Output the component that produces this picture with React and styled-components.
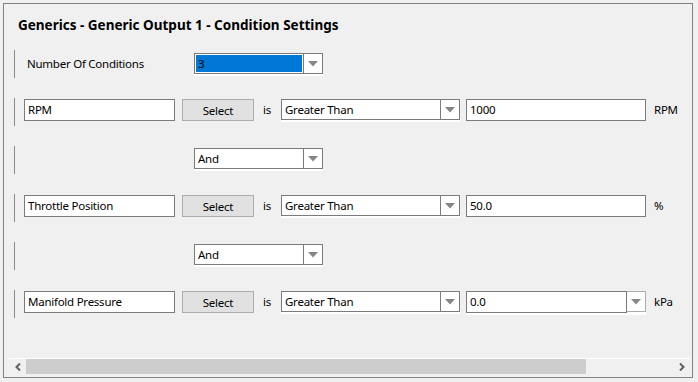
import React from 'react';
import styled, { createGlobalStyle } from 'styled-components';

const GlobalStyle = createGlobalStyle`
	html, body {
		margin: 0;
		padding: 0;
		background: #f0f0f0;
	}
	body {
		font-family: 'Noto Sans', 'Open Sans', sans-serif;
		font-size: 11.5px;
		letter-spacing: -0.25px;
		color: #000;
	}
`;

const conditions = [
	{ name: 'RPM', value: '1000', unit: 'RPM' },
	{ name: 'Throttle Position', value: '50.0', unit: '%' },
	{ name: 'Manifold Pressure', value: '0.0', unit: 'kPa', editable: true },
];

const Arrow = () => (
	<svg width="10" height="6" viewBox="0 0 10 6">
		<polygon points="0,0 10,0 5,5.5" fill="#868686" />
	</svg>
);

const Combo = ({ value, width, selected, left, top }) => (
	<ComboBox $width={width} $left={left} $top={top}>
		<ComboText $selected={selected}>{value}</ComboText>
		<ComboButton>
			<Arrow />
		</ComboButton>
	</ComboBox>
);

const App = () => {
	return (
		<>
			<GlobalStyle />
			<Frame>
				<Title>Generics - Generic Output 1 - Condition Settings</Title>
				<Content>
					<Group>
						<Label>Number Of Conditions</Label>
						<Combo value="3" width={129} selected left={0} top={2} />
					</Group>
					{conditions.map((c, i) => (
						<React.Fragment key={c.name}>
							{i > 0 && (
								<Group>
									<Combo value="And" width={129} left={179} top={1} />
								</Group>
							)}
							<Group>
								<TextBox>{c.name}</TextBox>
								<SelectButton>Select</SelectButton>
								<IsLabel>is</IsLabel>
								<Combo value="Greater Than" width={179} left={0} top={0} />
								{c.editable ? (
									<EditCombo>
										<EditField>{c.value}</EditField>
										<EditButton>
											<Arrow />
										</EditButton>
									</EditCombo>
								) : (
									<ValueBox>{c.value}</ValueBox>
								)}
								<Unit>{c.unit}</Unit>
							</Group>
						</React.Fragment>
					))}
				</Content>
				<ScrollBar>
					<ScrollArrow>
						<svg width="6" height="8" viewBox="0 0 6 8">
							<polyline points="5,0.5 1.5,4 5,7.5" fill="none" stroke="#606060" strokeWidth="2" />
						</svg>
					</ScrollArrow>
					<Track>
						<Thumb $width={560} />
					</Track>
					<ScrollArrow>
						<svg width="6" height="8" viewBox="0 0 6 8">
							<polyline points="1,0.5 4.5,4 1,7.5" fill="none" stroke="#606060" strokeWidth="2" />
						</svg>
					</ScrollArrow>
				</ScrollBar>
			</Frame>
		</>
	);
};

export default App;

const Frame = styled.div`
	margin: 3px;
	width: 690px;
	height: 375px;
	box-sizing: border-box;
	border: 1px solid #828282;
	display: flex;
	flex-direction: column;
`;

const Title = styled.div`
	padding: 13px 0 0 14px;
	font-size: 13.5px;
	letter-spacing: 0;
	font-weight: 700;
	line-height: 16px;
	height: 16px;
`;

const Content = styled.div`
	flex: 1;
	padding: 17px 0 0 10px;
	display: flex;
	flex-direction: column;
	gap: 20px;
`;

const Group = styled.div`
	height: 28px;
	box-sizing: border-box;
	border-left: 1px solid #8c8c8c;
	padding-top: 1px;
	display: flex;
	align-items: flex-start;
`;

const Label = styled.div`
	width: 167px;
	margin-left: 12px;
	line-height: 24px;
	height: 24px;
	padding-top: 1px;
`;

const ComboBox = styled.div`
	margin-left: ${(p) => p.$left}px;
	margin-top: ${(p) => p.$top}px;
	width: ${(p) => p.$width}px;
	height: 21px;
	box-sizing: border-box;
	border: 1px solid #7a7a7a;
	background: #fff;
	box-shadow: 0 2px 0 #fff;
	display: flex;
	align-items: stretch;
`;

const ComboText = styled.div`
	flex: 1;
	margin: 1px;
	padding-left: 2px;
	line-height: 17px;
	background: ${(p) => (p.$selected ? '#0078d7' : '#fff')};
	color: #000;
	white-space: nowrap;
	overflow: hidden;
`;

const ComboButton = styled.div`
	width: 18px;
	border-left: 1px solid #7a7a7a;
	display: flex;
	align-items: center;
	justify-content: center;
`;

const TextBox = styled.div`
	margin-left: 9px;
	width: 151px;
	height: 22px;
	box-sizing: border-box;
	border: 1px solid #7a7a7a;
	background: #fff;
	padding-left: 3px;
	line-height: 20px;
	white-space: nowrap;
`;

const SelectButton = styled.div`
	margin-left: 7px;
	width: 72px;
	height: 22px;
	box-sizing: border-box;
	border: 1px solid #adadad;
	background: #e1e1e1;
	text-align: center;
	line-height: 21px;
`;

const IsLabel = styled.div`
	width: 27px;
	box-sizing: border-box;
	padding-left: 9px;
	line-height: 22px;
`;

const ValueBox = styled(TextBox)`
	margin-left: 6px;
	width: 180px;
`;

const EditCombo = styled.div`
	margin-left: 6px;
	display: flex;
	background: #fff;
	box-shadow: 0 2px 0 #fff;
`;

const EditField = styled(TextBox)`
	margin-left: 0;
	width: 161px;
`;

const EditButton = styled.div`
	width: 19px;
	height: 21px;
	box-sizing: border-box;
	border: 1px solid #adadad;
	border-left: none;
	display: flex;
	align-items: center;
	justify-content: center;
`;

const Unit = styled.div`
	margin-left: 8px;
	line-height: 22px;
`;

const ScrollBar = styled.div`
	margin: 0 2px 3px 5px;
	height: 16px;
	box-sizing: border-box;
	border-top: 1px solid #fff;
	display: flex;
	align-items: stretch;
`;

const ScrollArrow = styled.div`
	width: 17px;
	display: flex;
	align-items: center;
	justify-content: center;
`;

const Track = styled.div`
	flex: 1;
	display: flex;
`;

const Thumb = styled.div`
	width: ${(p) => p.$width}px;
	background: #cdcdcd;
`;
